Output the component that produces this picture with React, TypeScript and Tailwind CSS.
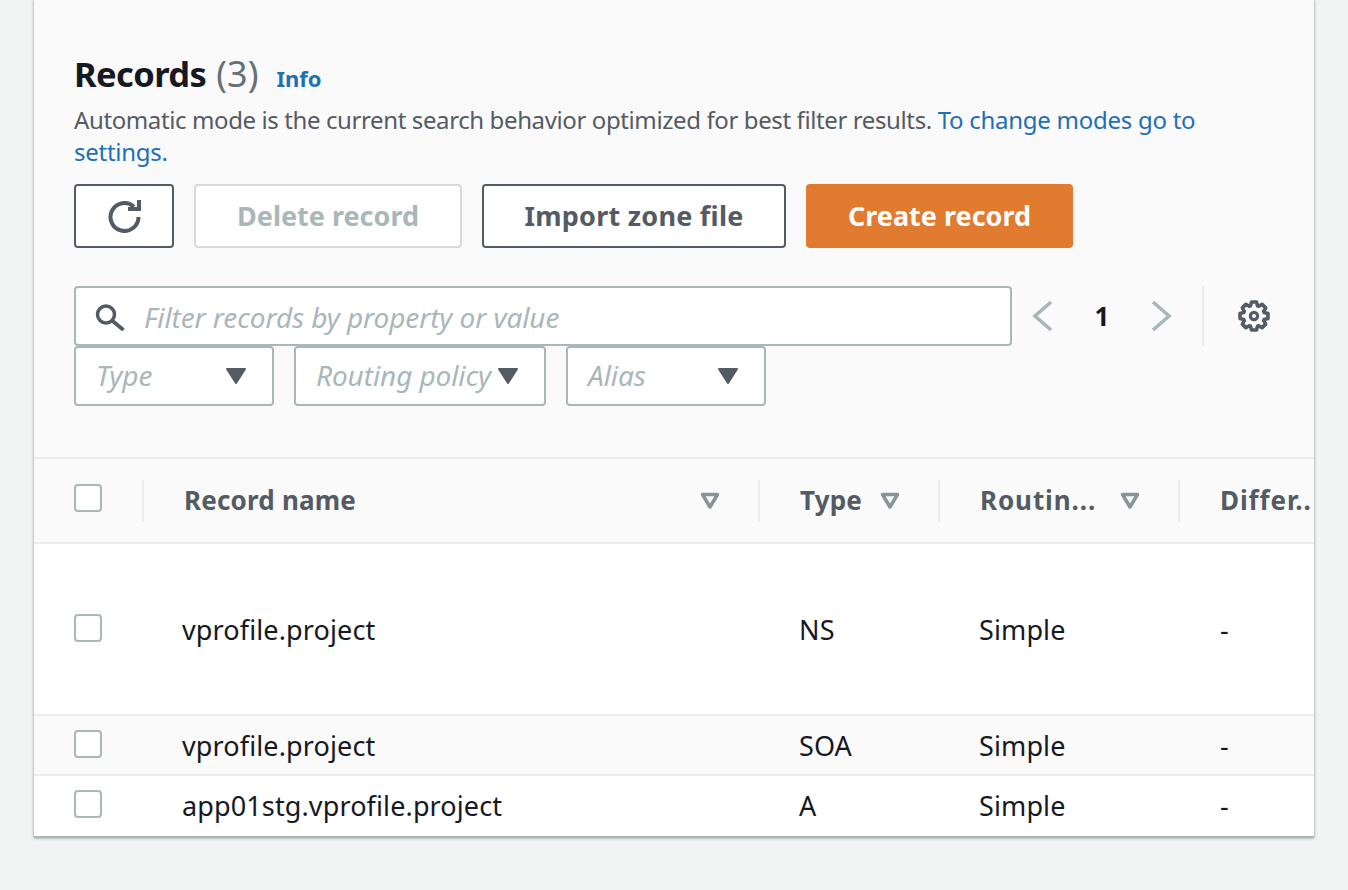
import React from "react";

function gearPath(cx: number, cy: number, outer: number, base: number) {
  const pts: string[] = [];
  for (let i = 0; i < 8; i++) {
    const a = (i * 45 * Math.PI) / 180 - Math.PI / 2;
    const offs: [number, number][] = [
      [-19, base],
      [-10, outer],
      [10, outer],
      [19, base],
    ];
    for (const [d, r] of offs) {
      const t = a + (d * Math.PI) / 180;
      pts.push(`${(cx + r * Math.cos(t)).toFixed(2)} ${(cy + r * Math.sin(t)).toFixed(2)}`);
    }
  }
  return "M" + pts.join("L") + "Z";
}

function Caret() {
  return (
    <svg width="22" height="18" viewBox="0 0 22 18" className="shrink-0">
      <path d="M2 2 H20 L11 16 Z" fill="#545b64" stroke="#545b64" strokeWidth="2" strokeLinejoin="round" />
    </svg>
  );
}

function SortIcon() {
  return (
    <svg width="20" height="18" viewBox="0 0 20 18" className="shrink-0">
      <path d="M2.5 2.500 H17.500 L10 15 Z" fill="none" stroke="#879596" strokeWidth="3.5" strokeLinejoin="round" />
    </svg>
  );
}

function Check() {
  return <div className="w-[28px] h-[28px] rounded-[4px] border-2 border-[#aab7b8] bg-white shrink-0" />;
}

function Sep() {
  return <div className="w-[2px] h-[42px] bg-[#eaeded] shrink-0" />;
}

function Select({ label, w }: { label: string; w: string }) {
  return (
    <div className={`${w} h-[60px] bg-white border-2 border-[#aab7b8] rounded-[4px] flex items-center justify-between pl-[20px] pr-[25px]`}>
      <span className="italic text-[#aab7b8] text-[28px] tracking-[-0.1px] pb-[2px]">{label}</span>
      <Caret />
    </div>
  );
}

function Row({ name, type, cls, textCls, checkCls }: { name: string; type: string; cls: string; textCls: string; checkCls: string }) {
  return (
    <div className={`${cls} shrink-0 grid grid-cols-[110px_616px_180px_240px_1fr] text-[#16191f] text-[27px] tracking-[0.12px]`}>
      <div className={`flex items-center pl-[40px] ${checkCls}`}><Check /></div>
      <div className={`flex items-center pl-[38px] ${textCls}`}>{name}</div>
      <div className={`flex items-center pl-[39px] ${textCls}`}>{type}</div>
      <div className={`flex items-center pl-[39px] ${textCls}`}>Simple</div>
      <div className={`flex items-center pl-[40px] ${textCls}`}>-</div>
    </div>
  );
}

export default function App() {
  return (
    <div className="w-[1348px] h-[890px] overflow-hidden bg-[#f2f3f3] pl-[34px] font-['Noto_Sans','Open_Sans',sans-serif]">
      <div className="w-[1280px] h-[838px] bg-[#fafafa] border-b-2 border-[#aab7b8] shadow-[0_0_3px_rgba(0,28,36,0.45)] flex flex-col">
        <div className="h-[457px] pl-[40px] pt-[52px] shrink-0">
          <div className="flex items-baseline h-[44px]">
            <span className="font-bold text-[#16191f] text-[34.5px] leading-[44px] tracking-[-0.6px]">Records</span>
            <span className="text-[#687078] text-[36px] leading-[44px] ml-[10px]">(3)</span>
            <span className="font-bold text-[#1f6fb5] text-[22px] ml-[18px]">Info</span>
          </div>
          <p className="w-[1160px] mt-[8px] text-[#545b64] text-[24px] leading-[32px] tracking-[-0.39px]">
            Automatic mode is the current search behavior optimized for best filter results.{" "}
            <span className="text-[#1f6fb5] tracking-[-0.27px]">To change modes go to settings.</span>
          </p>
          <div className="flex gap-[20px] mt-[16px] font-bold text-[27px]">
            <div className="w-[100px] h-[64px] bg-white border-2 border-[#545b64] rounded-[4px] flex items-center justify-center">
              <svg width="34" height="34" viewBox="0 0 34 34" fill="none">
                <path d="M31.500 18a14 14 0 1 1-4.500-10.300" stroke="#545b64" strokeWidth="4" />
                <path d="M21 10H32V1" stroke="#545b64" strokeWidth="4" />
              </svg>
            </div>
            <div className="w-[268px] h-[64px] bg-white border-2 border-[#d5dbdb] rounded-[4px] text-[#aab7b8] flex items-center justify-center">Delete record</div>
            <div className="w-[304px] h-[64px] bg-white border-2 border-[#545b64] rounded-[4px] text-[#545b64] flex items-center justify-center tracking-[0.25px]">Import zone file</div>
            <div className="w-[267px] h-[64px] bg-[#e07b30] rounded-[4px] text-white flex items-center justify-center">Create record</div>
          </div>
          <div className="flex items-center mt-[38px] h-[60px]">
            <div className="w-[938px] h-[60px] bg-white border-2 border-[#aab7b8] rounded-[4px] flex items-center pl-[19px]">
              <svg width="30" height="30" viewBox="0 0 30 30" fill="none" className="shrink-0">
                <circle cx="11" cy="13.500" r="8.500" stroke="#545b64" strokeWidth="3.500" />
                <path d="M17 19.500L28.500 29" stroke="#545b64" strokeWidth="3.800" />
              </svg>
              <span className="italic text-[#aab7b8] text-[28px] ml-[19px] pt-[2px] tracking-[-0.1px]">Filter records by property or value</span>
            </div>
            <svg width="24" height="32" viewBox="0 0 24 32" fill="none" className="ml-[19px] shrink-0">
              <path d="M20 2L4 16L20 30" stroke="#aab7b8" strokeWidth="3.600" />
            </svg>
            <span className="w-[94px] text-center font-bold text-[#16191f] text-[26px]">1</span>
            <svg width="24" height="32" viewBox="0 0 24 32" fill="none" className="shrink-0">
              <path d="M4 2L20 16L4 30" stroke="#aab7b8" strokeWidth="3.600" />
            </svg>
            <div className="w-[2px] h-[60px] bg-[#eaeded] ml-[29px] shrink-0" />
            <svg width="34" height="34" viewBox="0 0 34 34" fill="none" stroke="#545b64" strokeLinejoin="round" className="ml-[33px] shrink-0">
              <path d={gearPath(17, 17, 14.2, 10.8)} strokeWidth="3.600" />
              <circle cx="17" cy="17" r="3.600" strokeWidth="3.200" />
            </svg>
          </div>
          <div className="flex gap-[20px]">
            <Select label="Type" w="w-[200px]" />
            <Select label="Routing policy" w="w-[252px]" />
            <Select label="Alias" w="w-[200px]" />
          </div>
        </div>
        <div className="h-[87px] shrink-0 border-y-2 border-[#eaeded] bg-[#fafafa] grid grid-cols-[110px_616px_180px_240px_1fr] font-bold text-[#545b64] text-[26px] tracking-[0.2px] overflow-hidden">
          <div className="flex items-center justify-between pl-[40px]">
            <div className="pb-[5px]"><Check /></div>
            <Sep />
          </div>
          <div className="flex items-center justify-between pl-[40px]">
            <span>Record name</span>
            <div className="flex items-center gap-[38px]"><SortIcon /><Sep /></div>
          </div>
          <div className="flex items-center pl-[40px]">
            <span>Type</span>
            <div className="ml-auto flex items-center gap-[38px]"><SortIcon /><Sep /></div>
          </div>
          <div className="flex items-center pl-[40px]">
            <span className="tracking-[0.9px]">Routin...</span>
            <div className="ml-auto flex items-center gap-[38px]"><SortIcon /><Sep /></div>
          </div>
          <div className="flex items-center pl-[40px] whitespace-nowrap tracking-[0.9px]">Differ..</div>
        </div>
        <Row name="vprofile.project" type="NS" cls="h-[172px] bg-white border-b-2 border-[#eaeded]" textCls="pt-[2px]" checkCls="pb-[2px]" />
        <Row name="vprofile.project" type="SOA" cls="h-[60px] bg-[#fafafa] border-b-2 border-[#eaeded]" textCls="pt-[2px]" checkCls="pb-[2px]" />
        <Row name="app01stg.vprofile.project" type="A" cls="h-[60px] bg-white" textCls="" checkCls="pb-[4px]" />
      </div>
    </div>
  );
}
